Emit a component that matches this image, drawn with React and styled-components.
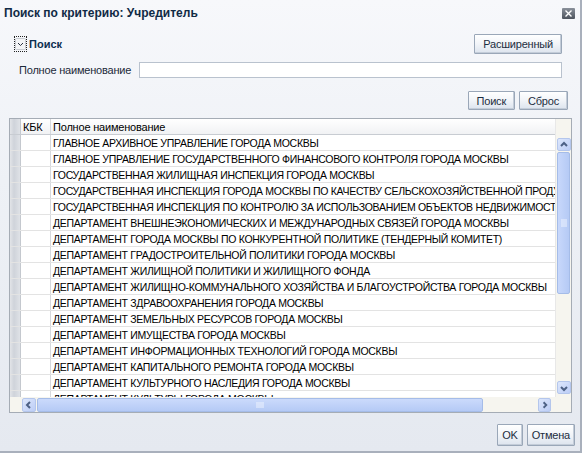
import React from "react";
import styled, { createGlobalStyle } from "styled-components";

const Global = createGlobalStyle`
  html, body { margin: 0; padding: 0; background: #e9ecf2; }
  body { font-family: "Liberation Sans", Arial, sans-serif; font-size: 11px; letter-spacing: -0.2px; }
  * { box-sizing: border-box; }
`;

const Dialog = styled.div`
  width: 582px;
  height: 453px;
  background: linear-gradient(#f7f8fb 0%, #eef1f6 40%, #e5e9f0 100%);
  border-right: 2px solid #a9b0bc;
  border-bottom: 2px solid #a9b0bc;
  display: flex;
  flex-direction: column;
  color: #1c2a3a;
`;

const TitleBar = styled.div`
  height: 28px;
  display: flex;
  align-items: center;
  justify-content: space-between;
  padding: 0 4px 2px 4px;
`;

const Title = styled.div`
  font-weight: bold;
  font-size: 12px;
  letter-spacing: 0;
  color: #102a45;
`;

const CloseButton = styled.div`
  width: 13px;
  height: 11px;
  border-radius: 1px;
  background: linear-gradient(#8a909a, #4e545e);
  display: flex;
  align-items: center;
  justify-content: center;
  margin-right: 1px;
`;

const SectionRow = styled.div`
  display: flex;
  align-items: center;
  justify-content: space-between;
  padding: 0 18px 0 14px;
  margin-top: 6px;
  height: 20px;
`;

const Disclosure = styled.div`
  display: flex;
  align-items: center;
  gap: 2px;
  font-weight: bold;
  letter-spacing: 0;
  color: #0d2f4f;
`;

const ToggleBox = styled.div`
  width: 13px;
  height: 16px;
  border: 1px dotted #222;
  display: flex;
  align-items: center;
  justify-content: center;
`;

const Button = styled.div`
  height: ${(p) => p.$h || 20}px;
  padding: 0 ${(p) => p.$pad || 6}px;
  display: flex;
  align-items: center;
  justify-content: center;
  border: 1px solid #9aa7b8;
  border-radius: 1px;
  background: linear-gradient(#ffffff 0%, #f1f4f8 50%, #dde4ee 100%);
  box-shadow: inset -1px -1px 0 #c3ccd8;
  color: #1d2d40;
  font-size: 11px;
  white-space: nowrap;
`;

const FieldRow = styled.div`
  display: flex;
  align-items: center;
  margin-top: 8px;
  padding: 0 18px 0 19px;
  height: 16px;
`;

const Label = styled.div`
  width: 120px;
  color: #1c2a3a;
`;

const Input = styled.div`
  flex: 1;
  height: 16px;
  background: #fff;
  border: 1px solid #b9c2ce;
`;

const ActionRow = styled.div`
  display: flex;
  justify-content: flex-end;
  gap: 4px;
  padding-right: 12px;
  margin-top: 13px;
`;

const Grid = styled.div`
  margin: 8px 0 0 9px;
  width: 563px;
  height: 295px;
  border: 1px solid #a5acb5;
  background: #fff;
  display: flex;
  flex-direction: column;
  overflow: hidden;
`;

const GridBody = styled.div`
  flex: 1;
  display: flex;
  min-height: 0;
`;

const RowsArea = styled.div`
  flex: 1;
  overflow: hidden;
  min-width: 0;
`;

const Row = styled.div`
  display: grid;
  grid-template-columns: 11px 30px 1fr;
  height: 16px;
  border-bottom: 1px solid ${(p) => (p.$head ? "#c8ccd2" : "#e3e3e3")};
  background: ${(p) => (p.$head ? "linear-gradient(#ffffff, #f1f2f4)" : "#fff")};
`;

const Gutter = styled.div`
  background: linear-gradient(90deg, #e2e4e8 0%, #cfd3da 40%, #dfe2e7 100%);
  border-right: 1px solid #c4c8ce;
`;

const Cell = styled.div`
  padding-left: 2px;
  line-height: 16px;
  white-space: nowrap;
  overflow: hidden;
  color: #000;
  font-size: ${(p) => (p.$caps ? "10.5px" : "11px")};
  letter-spacing: ${(p) => (p.$caps ? "-0.3px" : "-0.2px")};
  border-right: ${(p) => (p.$sep ? "1px solid #d6d8dc" : "none")};
`;

const VScrollColumn = styled.div`
  width: 16px;
  background: #f6f5ef;
  border-left: 1px solid #e8e8e8;
  padding: 19px 1px 3px 1px;
  display: flex;
  flex-direction: column;
`;

const ScrollArrow = styled.div`
  width: ${(p) => p.$w || 14}px;
  height: ${(p) => p.$h || 13}px;
  flex-shrink: 0;
  border-radius: 2px;
  border: 1px solid #b4c6ec;
  background: linear-gradient(135deg, #dde7fc, #bccdf6);
  display: flex;
  align-items: center;
  justify-content: center;
`;

const VThumb = styled.div`
  margin-top: 1px;
  height: 142px;
  border-radius: 2px;
  border: 1px solid #a5bce8;
  background: linear-gradient(90deg, #c8d8fb, #b5caf5);
  display: flex;
  align-items: center;
  justify-content: center;
`;

const VTrack = styled.div`
  flex: 1;
`;

const HScrollRow = styled.div`
  height: 15px;
  display: flex;
  align-items: center;
  background: #f6f5ef;
  padding-left: 12px;
`;

const HThumb = styled.div`
  margin-left: 1px;
  width: 446px;
  height: 14px;
  border-radius: 2px;
  border: 1px solid #a5bce8;
  background: linear-gradient(#cbdafb, #b5caf5);
  display: flex;
  align-items: center;
  justify-content: center;
`;

const HTrack = styled.div`
  width: 55px;
`;

const Footer = styled.div`
  display: flex;
  justify-content: flex-end;
  gap: 4px;
  padding-right: 5px;
  margin-top: 11px;
`;

const Arrow = ({ dir }) => {
  const d = {
    up: "M3 7 L6 4 L9 7",
    down: "M3 5 L6 8 L9 5",
    left: "M7 3 L4 6 L7 9",
    right: "M5 3 L8 6 L5 9",
  }[dir];
  return (
    <svg width="12" height="12" viewBox="0 0 12 12">
      <path d={d} fill="none" stroke="#4d6185" strokeWidth="2" />
    </svg>
  );
};

const Grip = ({ vertical }) => (
  <svg width="8" height="8" viewBox="0 0 8 8">
    {[1, 3, 5, 7].map((v) =>
      vertical ? (
        <line key={v} x1="1" x2="7" y1={v} y2={v} stroke="#eef3fe" strokeWidth="1" />
      ) : (
        <line key={v} y1="1" y2="7" x1={v} x2={v} stroke="#eef3fe" strokeWidth="1" />
      )
    )}
  </svg>
);

const rows = [
  "ГЛАВНОЕ АРХИВНОЕ УПРАВЛЕНИЕ ГОРОДА МОСКВЫ",
  "ГЛАВНОЕ УПРАВЛЕНИЕ ГОСУДАРСТВЕННОГО ФИНАНСОВОГО КОНТРОЛЯ ГОРОДА МОСКВЫ",
  "ГОСУДАРСТВЕННАЯ ЖИЛИЩНАЯ ИНСПЕКЦИЯ ГОРОДА МОСКВЫ",
  "ГОСУДАРСТВЕННАЯ ИНСПЕКЦИЯ ГОРОДА МОСКВЫ ПО КАЧЕСТВУ СЕЛЬСКОХОЗЯЙСТВЕННОЙ ПРОДУКЦИИ",
  "ГОСУДАРСТВЕННАЯ ИНСПЕКЦИЯ ПО КОНТРОЛЮ ЗА ИСПОЛЬЗОВАНИЕМ ОБЪЕКТОВ НЕДВИЖИМОСТИ ГОРОДА МОСКВЫ",
  "ДЕПАРТАМЕНТ ВНЕШНЕЭКОНОМИЧЕСКИХ И МЕЖДУНАРОДНЫХ СВЯЗЕЙ ГОРОДА МОСКВЫ",
  "ДЕПАРТАМЕНТ ГОРОДА МОСКВЫ ПО КОНКУРЕНТНОЙ ПОЛИТИКЕ (ТЕНДЕРНЫЙ КОМИТЕТ)",
  "ДЕПАРТАМЕНТ ГРАДОСТРОИТЕЛЬНОЙ ПОЛИТИКИ ГОРОДА МОСКВЫ",
  "ДЕПАРТАМЕНТ ЖИЛИЩНОЙ ПОЛИТИКИ И ЖИЛИЩНОГО ФОНДА",
  "ДЕПАРТАМЕНТ ЖИЛИЩНО-КОММУНАЛЬНОГО ХОЗЯЙСТВА И БЛАГОУСТРОЙСТВА ГОРОДА МОСКВЫ",
  "ДЕПАРТАМЕНТ ЗДРАВООХРАНЕНИЯ ГОРОДА МОСКВЫ",
  "ДЕПАРТАМЕНТ ЗЕМЕЛЬНЫХ РЕСУРСОВ ГОРОДА МОСКВЫ",
  "ДЕПАРТАМЕНТ ИМУЩЕСТВА ГОРОДА МОСКВЫ",
  "ДЕПАРТАМЕНТ ИНФОРМАЦИОННЫХ ТЕХНОЛОГИЙ ГОРОДА МОСКВЫ",
  "ДЕПАРТАМЕНТ КАПИТАЛЬНОГО РЕМОНТА ГОРОДА МОСКВЫ",
  "ДЕПАРТАМЕНТ КУЛЬТУРНОГО НАСЛЕДИЯ ГОРОДА МОСКВЫ",
  "ДЕПАРТАМЕНТ КУЛЬТУРЫ ГОРОДА МОСКВЫ",
];

export default function App() {
  return (
    <>
      <Global />
      <Dialog>
        <TitleBar>
          <Title>Поиск по критерию: Учредитель</Title>
          <CloseButton>
            <svg width="9" height="9" viewBox="0 0 9 9">
              <path d="M1.5 1.5 L7.5 7.5 M7.5 1.5 L1.5 7.5" stroke="#fff" strokeWidth="1.4" />
            </svg>
          </CloseButton>
        </TitleBar>

        <SectionRow>
          <Disclosure>
            <ToggleBox>
              <svg width="11" height="12" viewBox="0 0 11 12">
                <rect x="0.5" y="0.5" width="10" height="11" rx="1" fill="#f3f4f6" stroke="#c9ccd2" />
                <path d="M3 5 L5.5 7.5 L8 5" fill="none" stroke="#2a3140" strokeWidth="1" />
              </svg>
            </ToggleBox>
            <span>Поиск</span>
          </Disclosure>
          <Button $pad={8}>Расширенный</Button>
        </SectionRow>

        <FieldRow>
          <Label>Полное наименование</Label>
          <Input />
        </FieldRow>

        <ActionRow>
          <Button $h={19} $pad={8}>Поиск</Button>
          <Button $h={19} $pad={8}>Сброс</Button>
        </ActionRow>

        <Grid>
          <GridBody>
            <RowsArea>
              <Row $head>
                <Gutter />
                <Cell $sep>КБК</Cell>
                <Cell>Полное наименование</Cell>
              </Row>
              {rows.map((r) => (
                <Row key={r}>
                  <Gutter />
                  <Cell $sep />
                  <Cell $caps>{r}</Cell>
                </Row>
              ))}
            </RowsArea>
            <VScrollColumn>
              <ScrollArrow>
                <Arrow dir="up" />
              </ScrollArrow>
              <VThumb>
                <Grip vertical />
              </VThumb>
              <VTrack />
              <ScrollArrow>
                <Arrow dir="down" />
              </ScrollArrow>
            </VScrollColumn>
          </GridBody>
          <HScrollRow>
            <ScrollArrow $w={14} $h={14}>
              <Arrow dir="left" />
            </ScrollArrow>
            <HThumb>
              <Grip />
            </HThumb>
            <HTrack />
            <ScrollArrow $w={13} $h={14}>
              <Arrow dir="right" />
            </ScrollArrow>
          </HScrollRow>
        </Grid>

        <Footer>
          <Button $h={22} $pad={4}>OK</Button>
          <Button $h={22} $pad={4}>Отмена</Button>
        </Footer>
      </Dialog>
    </>
  );
}
